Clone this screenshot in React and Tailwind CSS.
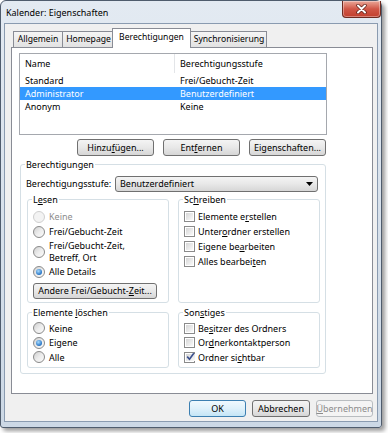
const font = { fontFamily: '"Noto Sans", "Open Sans", sans-serif' }

function U({ children }) {
  return <span className="underline underline-offset-[1px]">{children}</span>
}

function Btn({ children, className = "", variant = "normal" }) {
  const look =
    variant === "default"
      ? "border-[#3c7fb1] bg-gradient-to-b from-[#f0f9fe] via-[#dff1fb] to-[#c4e5f6] text-black"
      : variant === "disabled"
      ? "border-[#b9bdc0] bg-[#f4f4f4] text-[#8c8c8c]"
      : "border-[#707070] bg-gradient-to-b from-[#f4f4f4] via-[#e8e8e8] to-[#d6d6d6] text-black"
  return (
    <div className={`flex items-center justify-center rounded-[3px] border ${look} ${className}`}>
      {children}
    </div>
  )
}

function Radio({ checked, disabled }) {
  return (
    <span
      className={`flex h-[12px] w-[12px] shrink-0 items-center justify-center rounded-full border ${
        disabled
          ? "border-[#cfcfcf] bg-[#f3f3f3]"
          : "border-[#8a8a8a] bg-gradient-to-br from-[#cfcfcf] via-[#ececec] to-[#fbfbfb]"
      }`}
    >
      {checked && (
        <span className="h-[6px] w-[6px] rounded-full bg-[radial-gradient(circle_at_40%_35%,#a8dcff,#1d6cc0_75%)]" />
      )}
    </span>
  )
}

function Check({ checked }) {
  return (
    <span className="flex h-[11px] w-[11px] shrink-0 border border-[#8a8a8a] bg-white p-px">
      <span className="flex flex-1 items-center justify-center bg-gradient-to-br from-[#d6d6d6] to-[#fafafa]">
        {checked && (
          <svg width="9" height="9" viewBox="0 0 9 9" className="-mt-px">
            <path d="M1.2 4.6 L3.5 7.2 L7.8 1.2" fill="none" stroke="#3a4f8e" strokeWidth="1.6" />
          </svg>
        )}
      </span>
    </span>
  )
}

function Group({ label, className = "", children }) {
  return (
    <div className={`rounded-[3px] border border-[#d5dfe5] ${className}`}>
      <div className="-mt-[7px] ml-[4px] w-fit bg-white px-[1px] leading-[13px]">{label}</div>
      {children}
    </div>
  )
}

function RadioRow({ children, checked, disabled, className = "h-[15px]" }) {
  return (
    <div className={`flex items-center gap-[4px] ${className} ${disabled ? "text-[#8d8d8d]" : ""}`}>
      <Radio checked={checked} disabled={disabled} />
      <span>{children}</span>
    </div>
  )
}

function CheckRow({ children, checked, className = "h-[15px]" }) {
  return (
    <div className={`flex items-center gap-[3px] ${className}`}>
      <Check checked={checked} />
      <span>{children}</span>
    </div>
  )
}

export default function App() {
  const rows = [
    ["Standard", "Frei/Gebucht-Zeit", false],
    ["Administrator", "Benutzerdefiniert", true],
    ["Anonym", "Keine", false],
  ]

  return (
    <div className="h-[433px] w-[388px] bg-white text-[9px] text-black" style={font}>
      <div className="flex h-[428px] w-[382px] flex-col rounded-t-[6px] rounded-b-[3px] border border-[#4f5c6d] bg-gradient-to-b from-[#e3eaf2] to-[#ccd8e5] shadow-[3px_3px_4px_rgba(0,0,0,0.4)]">
        {/* title bar */}
        <div className="flex h-[22px] items-start justify-between">
          <span className="mt-[5px] ml-[5px] text-[9px] leading-[13px]">Kalender: Eigenschaften</span>
          <div className="flex h-[17px] w-[39px] items-center justify-center rounded-b-[4px] border border-t-0 border-[#6e2a20] bg-gradient-to-b from-[#e9a799] via-[#d05646] to-[#c23f2d] shadow-[inset_0_0_0_1px_rgba(255,255,255,0.35)]">
            <svg width="11" height="10" viewBox="0 0 11 10">
              <path d="M2 1.5 L9 8.5 M9 1.5 L2 8.5" stroke="#5b1d14" strokeWidth="3.4" strokeLinecap="round" />
              <path d="M2 1.5 L9 8.5 M9 1.5 L2 8.5" stroke="#ffffff" strokeWidth="2" strokeLinecap="round" />
            </svg>
          </div>
        </div>

        {/* client */}
        <div className="mx-[3px] mb-[5px] flex flex-1 flex-col border border-[#8a9bb0] bg-[#f0f0f0] pt-[4px]">
          {/* tabs */}
          <div className="ml-[8px] flex h-[19px] items-end text-[8.6px]">
            <div className="flex h-[16px] w-[50px] items-center justify-center border border-b-0 border-[#898c95] bg-gradient-to-b from-[#f5f5f5] to-[#e2e2e2]">
              Allgemein
            </div>
            <div className="-ml-px flex h-[16px] w-[53px] items-center justify-center border border-b-0 border-[#898c95] bg-gradient-to-b from-[#f5f5f5] to-[#e2e2e2]">
              Homepage
            </div>
            <div className="relative z-10 -mb-px -ml-[3px] flex h-[20px] w-[79px] items-start justify-center border border-b-0 border-[#898c95] bg-white pt-[2px]">
              Berechtigungen
            </div>
            <div className="-ml-[2px] flex h-[16px] w-[78px] items-center justify-center border border-b-0 border-[#898c95] bg-gradient-to-b from-[#f5f5f5] to-[#e2e2e2] pl-[2px]">
              Synchronisierung
            </div>
          </div>

          {/* panel */}
          <div className="ml-[6px] h-[347px] w-[362px] border border-[#898c95] bg-white">
            {/* list view */}
            <div className="mt-[5px] ml-[7px] h-[82px] w-[308px] border border-[#a5a8ae]">
              <div className="flex h-[19px] items-center">
                <div className="flex h-full w-[155px] items-center border-r border-[#e3e5e8] pl-[5px]">Name</div>
                <div className="pl-[5px]">Berechtigungsstufe</div>
              </div>
              <div className="mt-[1px]">
                {rows.map(([n, s, sel]) => (
                  <div
                    key={n}
                    className={`flex h-[13px] items-center ${sel ? "bg-[#3399ff] text-white" : ""}`}
                  >
                    <span className="w-[156px] pl-[5px]">{n}</span>
                    <span className="pl-[4px]">{s}</span>
                  </div>
                ))}
              </div>
            </div>

            {/* list buttons */}
            <div className="mt-[4px] ml-[7px] flex w-[307px] justify-end gap-[9px]">
              <Btn className="h-[17px] w-[77px]">
                Hinzu<U>f</U>ügen...
              </Btn>
              <Btn className="h-[17px] w-[77px]">
                Ent<U>f</U>ernen
              </Btn>
              <Btn className="h-[17px] w-[77px]">
                Ei<U>g</U>enschaften...
              </Btn>
            </div>

            {/* Berechtigungen group */}
            <Group label="Berechtigungen" className="mt-[8px] ml-[8px] h-[210px] w-[306px]">
              <div className="mt-[5px] flex items-center pl-[5px]">
                <span className="w-[89px]">
                  Berechti<U>g</U>ungsstufe:
                </span>
                <div className="flex h-[16px] w-[203px] items-center justify-between rounded-[3px] border border-[#707070] bg-gradient-to-b from-[#f4f4f4] via-[#e8e8e8] to-[#d6d6d6] pr-[4px] pl-[4px]">
                  <span>Benutzerdefiniert</span>
                  <svg width="7" height="4" viewBox="0 0 7 4">
                    <path d="M0 0 H7 L3.5 4 Z" fill="#000" />
                  </svg>
                </div>
              </div>

              <div className="mt-[7px] grid grid-cols-[142px_142px] gap-x-[9px] gap-y-[9px] pl-[6px]">
                <Group
                  label={
                    <>
                      L<U>e</U>sen
                    </>
                  }
                  className="h-[104px]"
                >
                  <div className="mt-[3px] pl-[5px]">
                    <RadioRow disabled>Keine</RadioRow>
                    <RadioRow>Frei/Gebucht-Zeit</RadioRow>
                    <div className="flex h-[25px] items-center gap-[4px]">
                      <Radio />
                      <span className="leading-[12px]">
                        Frei/Gebucht-Zeit,
                        <br />
                        Betreff, Ort
                      </span>
                    </div>
                    <RadioRow checked>Alle Details</RadioRow>
                    <Btn className="mt-[4px] h-[16px] w-[124px]">
                      Andere Frei/Gebucht-<U>Z</U>eit...
                    </Btn>
                  </div>
                </Group>

                <Group
                  label={
                    <>
                      Sc<U>h</U>reiben
                    </>
                  }
                  className="h-[104px]"
                >
                  <div className="mt-[3px] pl-[5px]">
                    <CheckRow>
                      Elemente e<U>r</U>stellen
                    </CheckRow>
                    <CheckRow>
                      Unter<U>o</U>rdner erstellen
                    </CheckRow>
                    <CheckRow>
                      Eigene be<U>a</U>rbeiten
                    </CheckRow>
                    <CheckRow>
                      Alles bearbei<U>t</U>en
                    </CheckRow>
                  </div>
                </Group>

                <Group
                  label={
                    <>
                      Elemente <U>l</U>öschen
                    </>
                  }
                  className="h-[56px]"
                >
                  <div className="mt-[2px] pl-[5px]">
                    <RadioRow className="h-[14.5px]">Keine</RadioRow>
                    <RadioRow className="h-[14.5px]" checked>
                      Eigene
                    </RadioRow>
                    <RadioRow className="h-[14.5px]">Alle</RadioRow>
                  </div>
                </Group>

                <Group
                  label={
                    <>
                      Son<U>s</U>tiges
                    </>
                  }
                  className="h-[56px]"
                >
                  <div className="mt-[2px] pl-[5px]">
                    <CheckRow className="h-[14.5px]">
                      Be<U>s</U>itzer des Ordners
                    </CheckRow>
                    <CheckRow className="h-[14.5px]">
                      Or<U>d</U>nerkontaktperson
                    </CheckRow>
                    <CheckRow className="h-[14.5px]" checked>
                      Ordner si<U>c</U>htbar
                    </CheckRow>
                  </div>
                </Group>
              </div>
            </Group>
          </div>

          {/* dialog buttons */}
          <div className="mt-[6px] flex justify-end gap-[6px] pr-[4px]">
            <Btn variant="default" className="h-[17px] w-[57px]">
              OK
            </Btn>
            <Btn className="h-[17px] w-[58px]">Abbrechen</Btn>
            <Btn variant="disabled" className="h-[17px] w-[57px]">
              <U>Ü</U>bernehmen
            </Btn>
          </div>
        </div>
      </div>
    </div>
  )
}
